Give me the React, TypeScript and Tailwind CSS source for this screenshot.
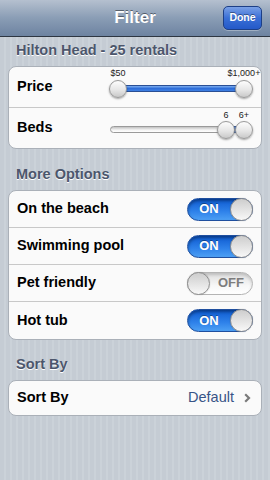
import React from 'react'

const font = "font-['Liberation_Sans','Helvetica',sans-serif]"

function Toggle({ on }: { on: boolean }) {
  if (on) {
    return (
      <div className="relative h-[23px] w-[66px] shrink-0 rounded-full border border-[#1f4f9f] bg-[linear-gradient(#0d5ad0,#2f82ea_60%,#4c9ff4)] shadow-[inset_0_2px_3px_rgba(0,0,0,0.35)]">
        <span className="absolute inset-y-0 left-0 right-[22px] flex items-center justify-center text-[13px] font-bold text-white [text-shadow:0_-1px_0_rgba(0,0,0,0.35)]">
          ON
        </span>
        <span className="absolute right-[-1px] top-[-1px] h-[23px] w-[23px] rounded-full border border-[#8f8f8f] bg-[linear-gradient(#cdcdcd,#f8f8f8)] shadow-[0_0_1px_rgba(0,0,0,0.3)]" />
      </div>
    )
  }
  return (
    <div className="relative h-[23px] w-[66px] shrink-0 rounded-full border border-[#b4b4b4] bg-[linear-gradient(#dedede,#f7f7f7_60%,#ffffff)] shadow-[inset_0_2px_3px_rgba(0,0,0,0.15)]">
      <span className="absolute inset-y-0 left-[22px] right-0 flex items-center justify-center text-[13px] font-bold text-[#7d7d7d]">
        OFF
      </span>
      <span className="absolute left-[-1px] top-[-1px] h-[23px] w-[23px] rounded-full border border-[#8f8f8f] bg-[linear-gradient(#cdcdcd,#f8f8f8)] shadow-[0_0_1px_rgba(0,0,0,0.3)]" />
    </div>
  )
}

function Thumb({ className }: { className: string }) {
  return (
    <span
      className={`absolute top-[13px] h-[18px] w-[18px] rounded-full border border-[#9a9a9a] bg-[linear-gradient(#fdfdfd,#e6e6e6_55%,#c9c9c9)] shadow-[0_1px_2px_rgba(0,0,0,0.35)] ${className}`}
    />
  )
}

function SectionHeader({ title }: { title: string }) {
  return (
    <div className="flex items-end pb-2 pl-4">
      <span className="text-[14.5px] font-bold leading-4 text-[#4c566c] [text-shadow:0_1px_0_#fff]">{title}</span>
    </div>
  )
}

const options = [
  { label: 'On the beach', on: true },
  { label: 'Swimming pool', on: true },
  { label: 'Pet friendly', on: false },
  { label: 'Hot tub', on: true },
]

export default function App() {
  return (
    <div
      className={`flex h-[480px] w-[270px] flex-col bg-[repeating-linear-gradient(90deg,#c5ccd4_0px,#c5ccd4_4px,#cbd2d9_4px,#cbd2d9_6px)] ${font}`}
    >
      {/* nav bar */}
      <div className="relative flex h-[37px] shrink-0 items-center justify-center border-b border-[#2d3642] bg-[linear-gradient(#b5c0cf,#8a9db5_50%,#6d83a1)]">
        <span className="text-[17px] font-bold text-white [text-shadow:0_-1px_0_rgba(0,0,0,0.45)]">Filter</span>
        <button className="absolute right-[8px] top-[6px] flex h-[24px] w-[39px] items-center justify-center rounded-[5px] border border-[#1d3f86] bg-[linear-gradient(#7aa0e6,#3a6fd6_50%,#2459c8)] text-[10.5px] font-bold text-white shadow-[0_1px_0_rgba(255,255,255,0.3)] [text-shadow:0_-1px_0_rgba(0,0,0,0.4)]">
          Done
        </button>
      </div>

      <div className="h-[29px] shrink-0 flex flex-col justify-end">
        <SectionHeader title="Hilton Head - 25 rentals" />
      </div>

      {/* sliders */}
      <div className="mx-2 shrink-0 overflow-hidden rounded-[8px] border border-[#aab0b8] bg-[#fafafa]">
        <div className="flex h-[41px] items-center border-b border-[#c8c8c8]">
          <span className="flex-1 pl-2 text-[14.5px] font-bold text-black">Price</span>
          <div className="relative mr-2 h-full w-[144px]">
            <span className="absolute left-[9px] top-0 -translate-x-1/2 text-[9px] leading-[12px] text-[#222]">$50</span>
            <span className="absolute left-[135px] top-0 -translate-x-1/2 whitespace-nowrap text-[9px] leading-[12px] text-[#222]">$1,000+</span>
            <span className="absolute left-[9px] right-[9px] top-[18px] h-[7px] rounded-full border border-[#2a4f95] bg-[linear-gradient(#7eaef0,#2e6ed9_50%,#3f80e3)]" />
            <Thumb className="left-0" />
            <Thumb className="right-0" />
          </div>
        </div>
        <div className="flex h-[40px] items-center">
          <span className="flex-1 pl-2 text-[14.5px] font-bold text-black">Beds</span>
          <div className="relative mr-2 h-full w-[144px]">
            <span className="absolute left-[117px] top-[1px] -translate-x-1/2 text-[9px] leading-[12px] text-[#222]">6</span>
            <span className="absolute left-[135px] top-[1px] -translate-x-1/2 text-[9px] leading-[12px] text-[#222]">6+</span>
            <span className="absolute left-[1px] right-[27px] top-[18px] h-[7px] rounded-full border border-[#9a9a9a] bg-[linear-gradient(#c2c2c2,#f4f4f4_60%,#ffffff)]" />
            <span className="absolute left-[117px] right-[9px] top-[18px] h-[7px] border-y border-[#2a4f95] bg-[#2e6ed9]" />
            <Thumb className="left-[108px]" />
            <Thumb className="right-0" />
          </div>
        </div>
      </div>

      <div className="h-[41px] shrink-0 flex flex-col justify-end">
        <SectionHeader title="More Options" />
      </div>

      {/* toggles */}
      <div className="mx-2 shrink-0 overflow-hidden rounded-[8px] border border-[#aab0b8] bg-[#fafafa]">
        {options.map((o, i) => (
          <div
            key={o.label}
            className={`flex h-[37px] items-center pl-2 pr-2 ${i < options.length - 1 ? 'border-b border-[#c8c8c8]' : 'h-[36px]'}`}
          >
            <span className="flex-1 text-[14.5px] font-bold text-black">{o.label}</span>
            <Toggle on={o.on} />
          </div>
        ))}
      </div>

      <div className="h-[40px] shrink-0 flex flex-col justify-end">
        <SectionHeader title="Sort By" />
      </div>

      <div className="mx-2 flex h-[36px] shrink-0 items-center rounded-[8px] border border-[#aab0b8] bg-[#fafafa] pl-2 pr-[10px]">
        <span className="flex-1 text-[14.5px] font-bold text-black">Sort By</span>
        <span className="text-[14.5px] text-[#385487]">Default</span>
        <svg width="7" height="10" viewBox="0 0 7 10" className="ml-[10px]">
          <polyline points="1.2,1.2 5,5 1.2,8.8" fill="none" stroke="#7a7a7a" strokeWidth="2.2" />
        </svg>
      </div>
    </div>
  )
}
